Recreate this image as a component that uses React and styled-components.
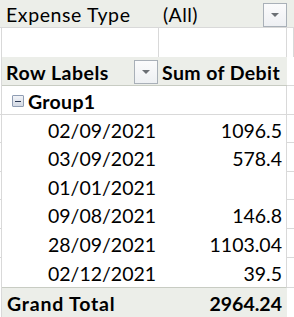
import React from 'react';
import styled, { createGlobalStyle } from 'styled-components';

const GlobalStyle = createGlobalStyle`
  html, body {
    margin: 0;
    padding: 0;
    background: #ffffff;
  }
  body {
    font-family: Lato, "Open Sans", "Liberation Sans", sans-serif;
    color: #000000;
  }
`;

const GRID = '#d9d9d9';
const HEAD = '#eceee9';
const PIVOT_LINE = '#c8ccc3';

const Sheet = styled.div`
  display: grid;
  grid-template-columns: 2px 157px 128px 7px;
  grid-template-rows: 28px 29px 29px 29px 28px 29px 28px 29px 29px 30px 29px;
  width: 294px;
  height: 317px;
  overflow: hidden;
  font-size: 19.5px;
`;

const Cell = styled.div`
  box-sizing: border-box;
  display: flex;
  align-items: center;
  min-width: 0;
  white-space: nowrap;
  padding: ${({ $pad }) => $pad || '2px 0 0 0'};
  justify-content: ${({ $align }) => ($align === 'right' ? 'flex-end' : 'flex-start')};
  background: ${({ $fill }) => ($fill ? HEAD : '#ffffff')};
  font-weight: ${({ $bold }) => ($bold ? 700 : 400)};
  letter-spacing: ${({ $ls }) => $ls || 'normal'};
  border-right: ${({ $r }) => ($r ? `1px solid ${$r === true ? GRID : $r}` : 'none')};
  border-bottom: ${({ $b }) => ($b ? `1px solid ${$b === true ? GRID : $b}` : 'none')};
`;

const Label = styled.span`
  flex: 1;
  letter-spacing: ${({ $ls }) => $ls || 'normal'};
`;

const DropButton = styled.div`
  box-sizing: border-box;
  width: 24px;
  height: 24px;
  flex: none;
  display: flex;
  align-items: center;
  justify-content: center;
  border: 1px solid #a9b0b8;
  background: linear-gradient(#fbfbfc, #eef0f3);
  margin-right: ${({ $mr }) => $mr || '0'};
  &::after {
    content: '';
    border-left: 4px solid transparent;
    border-right: 4px solid transparent;
    border-top: 4px solid #6b6f74;
  }
`;

const Toggle = styled.div`
  box-sizing: border-box;
  width: 12px;
  height: 12px;
  flex: none;
  margin: 0 4px 0 10px;
  display: flex;
  align-items: center;
  justify-content: center;
  border: 1px solid #8f9db3;
  border-radius: 1px;
  background: linear-gradient(#f2f4f8, #d3d9e4);
  &::after {
    content: '';
    width: 6px;
    height: 1px;
    background: #2c3a55;
  }
`;

const rows = [
  ['02/09/2021', '1096.5'],
  ['03/09/2021', '578.4'],
  ['01/01/2021', ''],
  ['09/08/2021', '146.8'],
  ['28/09/2021', '1103.04'],
  ['02/12/2021', '39.5'],
];

export default function App() {
  return (
    <>
      <GlobalStyle />
      <Sheet>
        {/* report filter */}
        <Cell $fill $b />
        <Cell $fill $b $pad="2px 0 0 4px" $ls="0.6px">Expense Type</Cell>
        <Cell $fill $b $pad="2px 0 0 4px">
          <Label $ls="0.4px">(All)</Label>
          <DropButton />
        </Cell>
        <Cell $fill $b />

        {/* blank row */}
        <Cell $r />
        <Cell $r />
        <Cell $r />
        <Cell $r />

        {/* header */}
        <Cell $r />
        <Cell $fill $bold $b={PIVOT_LINE} $pad="2px 0 0 4px">
          <Label $ls="0.5px">Row Labels</Label>
          <DropButton $mr="1px" />
        </Cell>
        <Cell $fill $bold $b={PIVOT_LINE} $pad="2px 0 0 3px" $ls="0.4px">Sum of Debit</Cell>
        <Cell $b />

        {/* group row */}
        <Cell $r $b />
        <Cell $bold $b $ls="0.3px">
          <Toggle />
          Group1
        </Cell>
        <Cell $b $r />
        <Cell $b />

        {rows.map(([date, value], i) => {
          const last = i === rows.length - 1;
          return (
            <React.Fragment key={date}>
              <Cell $r $b={!last} />
              <Cell $pad="2px 0 0 46px" $b={last ? PIVOT_LINE : false}>{date}</Cell>
              <Cell $r $align="right" $pad="2px 4px 0 0" $b={last ? PIVOT_LINE : false}>
                {value}
              </Cell>
              <Cell $b />
            </React.Fragment>
          );
        })}

        {/* grand total */}
        <Cell $r />
        <Cell $fill $bold $pad="2px 0 0 5px" $ls="0.8px">Grand Total</Cell>
        <Cell $fill $bold $align="right" $pad="2px 5px 0 0">2964.24</Cell>
        <Cell />
      </Sheet>
    </>
  );
}
